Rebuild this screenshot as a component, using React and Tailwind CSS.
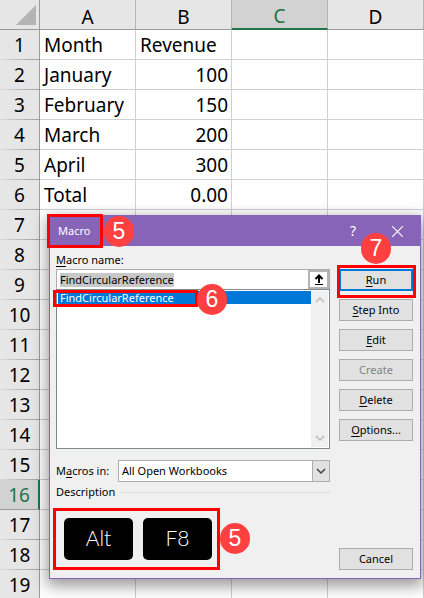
import { useState } from "react";

// Columns and rows of the sheet
const columns = ["A", "B", "C", "D"];
const data = [
    ["Month", "Revenue"],
    ["January", "100"],
    ["February", "150"],
    ["March", "200"],
    ["April", "300"],
    ["Total", "0.00"],
];
const ROW_COUNT = 19;
const ACTIVE_COL = "C";
const ACTIVE_ROW = 16;

function ColumnHeader({ name }) {
    const active = name === ACTIVE_COL;
    return (
        <th
            scope="col"
            className={`h-[29px] border-r border-r-[#b4b4b4] pb-0 text-center font-normal leading-6 ${
                active ? "border-b-2 border-b-[#217346] bg-[#d2d2d2] pt-1 text-[#217346]" : "border-b border-b-[#9b9b9b] bg-[#e6e6e6] pt-1"
            }`}
        >
            {name}
        </th>
    );
}

function RowHeader({ number }) {
    const active = number === ACTIVE_ROW;
    return (
        <th
            scope="row"
            className={`h-[30px] p-0 text-center font-normal leading-6 ${
                active
                    ? "border-b border-r-2 border-b-[#9b9b9b] border-r-[#217346] bg-[#d2d2d2] text-[#217346]"
                    : "border-b border-r bg-[#e6e6e6] [border-image:linear-gradient(to_right,#dcdcdc,#9b9b9b)_1]"
            }`}
        >
            {number}
        </th>
    );
}

function Sheet() {
    const rows = Array.from({ length: ROW_COUNT }, (_, i) => data[i] || []);
    return (
        <table className="w-full table-fixed border-separate border-spacing-0 text-[19px] text-black">
            <thead>
                <tr>
                    <td className="h-[29px] w-10 border-b border-r border-[#9b9b9b] bg-[#e6e6e6] p-0">
                        <svg viewBox="0 0 20 20" className="ml-auto mr-[3px] size-5">
                            <path d="M20 0V20H0Z" fill="#b4b4b4" />
                        </svg>
                    </td>
                    {columns.map((name) => (
                        <ColumnHeader key={name} name={name} />
                    ))}
                </tr>
            </thead>
            <tbody>
                {rows.map((row, i) => (
                    <tr key={i}>
                        <RowHeader number={i + 1} />
                        {columns.map((name, c) => (
                            <td
                                key={name}
                                className={`h-[30px] border-b border-r border-[#d0d0d0] py-0 pl-1 pr-[3px] leading-6 ${
                                    c === 1 && i > 0 ? "text-right" : ""
                                }`}
                            >
                                {row[c]}
                            </td>
                        ))}
                    </tr>
                ))}
            </tbody>
        </table>
    );
}

function DialogButton({ hotkey = "", children, disabled, primary }) {
    return (
        <button
            type="button"
            disabled={disabled}
            className={`h-[22px] w-full bg-[#e1e1e1] leading-4 disabled:text-[#838383] ${
                primary ? "border-2 border-[#0078d7]" : "border border-[#adadad]"
            }`}
        >
            <span className="underline underline-offset-2">{hotkey}</span>
            {children}
        </button>
    );
}

function Chevron({ up, className }) {
    return (
        <svg viewBox="0 0 10 10" className={className} fill="none" stroke="currentColor" strokeWidth="1.5">
            <path d={up ? "M1 7L5 3L9 7" : "M1 3L5 7L9 3"} />
        </svg>
    );
}

function Badge({ children, className }) {
    return (
        <span
            className={`absolute flex h-[31px] w-[30px] items-center justify-center rounded-full bg-[#ff4040] font-['Liberation_Sans',sans-serif] text-[23px] leading-none text-white ${className}`}
        >
            {children}
        </span>
    );
}

function Key({ children }) {
    return (
        <kbd className="flex h-[42px] flex-1 items-center justify-center rounded-[5px] bg-black pb-[2px] font-['Lato',sans-serif] text-[21px] font-light text-white">
            {children}
        </kbd>
    );
}

function MacroDialog() {
    const [macro, setMacro] = useState("FindCircularReference");
    return (
        <section
            role="dialog"
            aria-labelledby="macro-title"
            className="absolute left-[49px] right-[3px] top-[215px] border border-[#8764b8] bg-[#f0f0f0] text-[11px] leading-4 text-black shadow-[0_5px_14px_2px_rgba(0,0,0,0.4)]"
        >
            <header className="flex h-[30px] items-center bg-[#8764b8] pl-2 pr-[17px] text-white">
                <h1 id="macro-title" className="flex-1">Macro</h1>
                <button type="button" aria-label="Help" className="mr-9 text-[14px]">?</button>
                <button type="button" aria-label="Close">
                    <svg viewBox="0 0 10 10" className="size-[11px]" stroke="currentColor">
                        <path d="M0 0L10 10M10 0L0 10" />
                    </svg>
                </button>
            </header>

            <div className="flex gap-[9px] pb-2 pl-[6px] pr-[7px] pt-[5px]">
                <div className="flex-1">
                    <label htmlFor="macro-name" className="block h-[18px] leading-[18px]">
                        <span className="underline underline-offset-2">M</span>acro name:
                    </label>
                    <div className="flex h-5 items-center border border-b-0 border-[#adadad] bg-white pl-[3px]">
                        <div className="flex-1">
                            <input
                                id="macro-name"
                                value={macro}
                                onChange={(e) => setMacro(e.target.value)}
                                className="block h-[14px] bg-[#c8c8c8] leading-[14px] outline-none field-sizing-content"
                            />
                        </div>
                        <button type="button" aria-label="Go to reference" className="flex h-full w-[21px] items-center justify-center border-2 border-[#b4b4b4] bg-white">
                            <svg viewBox="0 0 10 11" className="h-[11px] w-[10px]" fill="none" stroke="black">
                                <path d="M5 9V1.5M1.5 5L5 1.5L8.500 5" strokeWidth="2" />
                                <path d="M1 10.500H9" />
                            </svg>
                        </button>
                    </div>
                    <div className="flex h-40 border border-[#828790] bg-white p-px">
                        <ul role="listbox" aria-label="Macros" className="flex-1">
                            <li role="option" aria-selected="true" className="h-[13px] bg-[#0078d7] pl-[2px] leading-[14px] text-white">
                                FindCircularReference
                            </li>
                        </ul>
                        <div className="flex w-[17px] flex-col items-center justify-between bg-[#f0f0f0] py-1 text-[#bababa]">
                            <Chevron up className="size-[10px]" />
                            <Chevron className="size-[10px]" />
                        </div>
                    </div>

                    <div className="mt-[11px] flex items-center">
                        <label htmlFor="macros-in" className="w-[62px]">
                            M<span className="underline underline-offset-2">a</span>cros in:
                        </label>
                        <div className="relative h-[22px] flex-1">
                            <select id="macros-in" className="h-full w-full appearance-none border border-[#adadad] bg-white pl-[3px] pr-5">
                                <option>All Open Workbooks</option>
                                <option>This Workbook</option>
                            </select>
                            <span className="pointer-events-none absolute inset-y-0 right-0 flex w-[18px] items-center justify-center border border-[#adadad] bg-[#e1e1e1] text-[#404040]">
                                <Chevron className="size-[10px]" />
                            </span>
                        </div>
                    </div>
                    <div className="flex h-5 items-center gap-[6px]">
                        <span>Description</span>
                        <hr className="flex-1 border-[#dcdcdc]" />
                    </div>
                    <div className="-ml-[3px] mt-[6px] flex h-[62px] w-[167px] items-center gap-[10px] border-3 border-[#ff0000] pl-2 pr-[5px]">
                        <Key>Alt</Key>
                        <Key>F8</Key>
                    </div>
                </div>

                <div className="flex w-[74px] flex-col gap-2 pt-[18px]">
                    <DialogButton hotkey="R" primary>un</DialogButton>
                    <DialogButton hotkey="S">tep Into</DialogButton>
                    <DialogButton hotkey="E">dit</DialogButton>
                    <DialogButton disabled>Create</DialogButton>
                    <DialogButton hotkey="D">elete</DialogButton>
                    <DialogButton hotkey="O">ptions...</DialogButton>
                    <div className="mt-auto">
                        <DialogButton>Cancel</DialogButton>
                    </div>
                </div>
            </div>
        </section>
    );
}

// Numbered steps and red frames that lie over the dialog
function Callouts() {
    return (
        <div className="pointer-events-none">
            <span className="absolute left-[47px] top-[214px] h-[34px] w-[56px] border-3 border-[#ff0000]" />
            <span className="absolute left-[53px] top-[290px] h-[17px] w-[145px] border-3 border-[#ff0000]" />
            <span className="absolute right-[8px] top-[265px] h-[33px] w-[79px] border-3 border-[#ff0000]" />
            <Badge className="left-[104px] top-[216px]">5</Badge>
            <Badge className="left-[197px] top-[284px]">6</Badge>
            <Badge className="right-[33px] top-[233px]">7</Badge>
            <Badge className="left-[220px] top-[523px]">5</Badge>
        </div>
    );
}

export default function App() {
    return (
        <main className="relative h-screen overflow-hidden bg-white font-['Noto_Sans',sans-serif]">
            <Sheet />
            <MacroDialog />
            <Callouts />
        </main>
    );
}
